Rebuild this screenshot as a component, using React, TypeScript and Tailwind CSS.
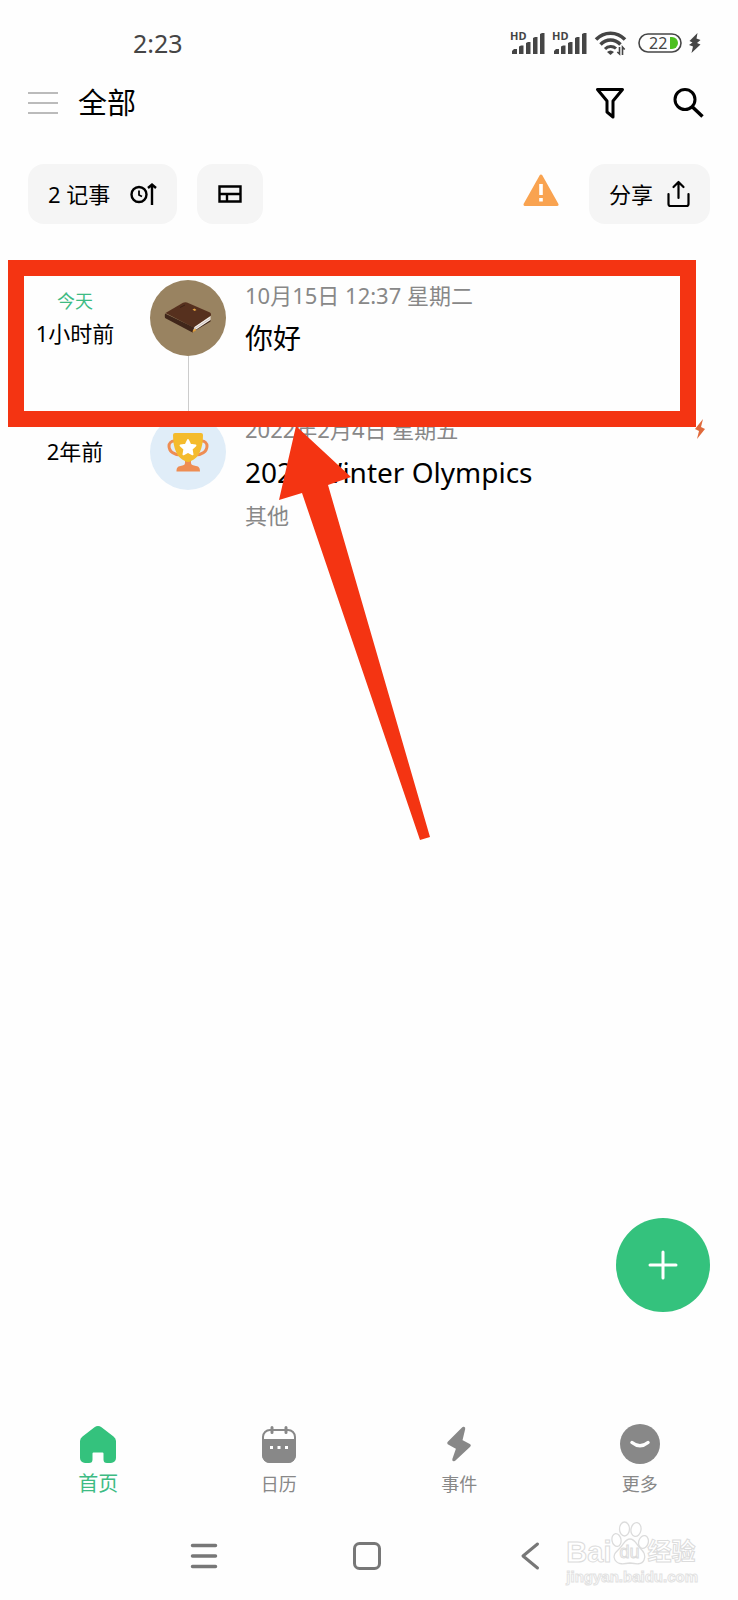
import React from "react";

type Tab = { label: string; icon: React.ReactNode; active?: boolean };

type Entry = {
  today?: string;
  ago: string;
  date: string;
  title: string;
  tag?: string;
  event?: boolean;
  badge: string;
  icon: React.ReactNode;
};

function Signal() {
  return (
    <svg width="36" height="24" viewBox="0 0 36 24" fill="#454545" aria-hidden="true">
      <path d="M2 23v-3l2-2h3v5zM9 23v-7.500l2-1h2.500v8.500zM16 23V12l2-1h2.500v12zM23 23V7l2-1h2.500v17zM30 23V3l2-1h2.500v21z" />
    </svg>
  );
}

function HdSignal() {
  return (
    <span className="relative flex">
      <Signal />
      <span className="absolute top-0 left-0 text-[11px] leading-[10px] font-bold">HD</span>
    </span>
  );
}

function Wifi() {
  return (
    <svg width="34" height="26" viewBox="0 0 34 26" fill="none" stroke="#454545" strokeWidth="3.500" aria-hidden="true">
      <path d="M2 9.500C10 1 23 1 31 9.500" />
      <path d="M6.500 14.500C12.500 8.500 20.500 8.500 26.500 14.500" />
      <path d="M11 19c3-3.300 8-3.300 11-.5" strokeWidth="3" />
      <path d="M13 22q3.500-3 7 0l-3.500 3z" fill="#454545" stroke="none" />
      <path d="M25.500 17v7l-2.200-2M28.500 25v-8l2.200 2.500" strokeWidth="1.600" />
    </svg>
  );
}

function Battery() {
  return (
    <span className="relative flex">
      <svg width="44" height="20" viewBox="0 0 44 20" fill="none" aria-hidden="true">
        <rect x="1" y="1" width="42" height="18" rx="9" stroke="#454545" strokeWidth="1.600" />
        <path d="M32 4h2a6 6 0 0 1 0 12h-2z" fill="#4cbf1f" />
      </svg>
      <span className="absolute top-0 left-[11px] text-[16px] leading-5">22</span>
    </span>
  );
}

function Book() {
  return (
    <svg width="48" height="34" viewBox="0 0 48 34" aria-hidden="true">
      <path d="M28 31.500 46.500 20.500v-2L30 28z" fill="#3b2115" />
      <path d="M29 26.500 46.500 15v4L30 30z" fill="#f1ece8" />
      <path d="M30 28 46 17.500" stroke="#c4b6b0" strokeWidth="0.800" />
      <path d="M1.500 12 19 1.700q2-1 4-.2L46 11.500q1.500 1 1 3L29.500 26.500z" fill="#56301e" />
      <path d="M1 12.500q-.5 3 0 4.500L27.500 31l1.500.500q-.5-3 1.500-5L28 25.500z" fill="#40261a" />
      <path d="m28.500 31.500 3.500-2v-2l-3 1.500zM28.500 8.500l2-1 2 1.500-2 1z" fill="#e0a040" />
      <path d="m16 6.500 5-2.500" stroke="#3b2115" strokeWidth="1" />
    </svg>
  );
}

function Trophy() {
  return (
    <svg width="42" height="40" viewBox="0 0 42 40" aria-hidden="true">
      <path d="M9 9H7a5 5 0 0 0-5 5c0 6 6 9 12 9M33 9h2a5 5 0 0 1 5 5c0 6-6 9-12 9" fill="none" stroke="#ee8d53" strokeWidth="3" />
      <path d="M18 26h6v5c0 2 2 2.500 5 3 3 .5 4 2 4 5.500H9.500c0-3.500 1-5 4-5.500 3-.5 4.500-1 4.500-3z" fill="#ee8d53" />
      <path d="M8 1h26a2 2 0 0 1 2 2c0 13-4 23-12 26q-3 2-6 0C10 26 6 16 6 3a2 2 0 0 1 2-2z" fill="#f4bb2c" />
      <path d="m21 8 2.300 4.700 5.200.8-3.800 3.700.9 5.200-4.600-2.500-4.600 2.500.9-5.200-3.800-3.700 5.200-.8z" fill="#fff" stroke="#fff" strokeWidth="1.800" strokeLinejoin="round" />
    </svg>
  );
}

const entries: Entry[] = [
  {
    today: "今天",
    ago: "1小时前",
    date: "10月15日 12:37 星期二",
    title: "你好",
    badge: "bg-[#998361]",
    icon: <Book />,
  },
  {
    ago: "2年前",
    date: "2022年2月4日 星期五",
    title: "2022 Winter Olympics",
    tag: "其他",
    event: true,
    badge: "bg-[#e0edf8]",
    icon: <Trophy />,
  },
];

const tabs: Tab[] = [
  {
    label: "首页",
    active: true,
    icon: (
      <svg width="40" height="40" viewBox="0 0 40 40" aria-hidden="true">
        <path d="M16.500 3.200a6 6 0 0 1 7 0L35.500 12.500A6 6 0 0 1 38 17v17a5 5 0 0 1-5 5h-4a3.500 3.500 0 0 1-3.500-3.500V29.500a1 1 0 0 0-1-1h-9a1 1 0 0 0-1 1v6A3.500 3.500 0 0 1 11 39H7a5 5 0 0 1-5-5V17a6 6 0 0 1 2.500-4.500z" fill="#34c27d" />
      </svg>
    ),
  },
  {
    label: "日历",
    icon: (
      <svg width="40" height="40" viewBox="0 0 40 40" aria-hidden="true">
        <rect x="4" y="6" width="32" height="32" rx="7" fill="none" stroke="#888" strokeWidth="2" />
        <path d="M3 15h34v16a8 8 0 0 1-8 8H11a8 8 0 0 1-8-8z" fill="#888" />
        <path d="M13 3.500v5M27 3.500v5" stroke="#888" strokeWidth="3" strokeLinecap="round" />
        <path d="M11 22h3v3h-3zM18.500 22h3v3h-3zM26 22h3v3h-3z" fill="#fff" />
      </svg>
    ),
  },
  {
    label: "事件",
    icon: (
      <svg width="40" height="40" viewBox="0 0 40 40" aria-hidden="true">
        <path d="M24.500 4.500 10 19l9 5-4 11.500L30 21.500 21.500 17z" fill="#888" stroke="#888" strokeWidth="3.500" strokeLinejoin="round" />
      </svg>
    ),
  },
  {
    label: "更多",
    icon: (
      <svg width="40" height="40" viewBox="0 0 40 40" aria-hidden="true">
        <circle cx="20" cy="20" r="20" fill="#888" />
        <path d="M12 18.500q8 6.500 16 0" fill="none" stroke="#fff" strokeWidth="3.500" strokeLinecap="round" />
      </svg>
    ),
  },
];

function Annotation() {
  return (
    <>
      <div className="pointer-events-none absolute -top-5 right-[42px] left-2 h-[167px] border-16 border-[#f43412]" />
      <svg className="pointer-events-none absolute top-[146px] left-[278px]" width="154" height="416" viewBox="0 0 154 416" aria-hidden="true">
        <path d="M18 0 73 51 50 59 152 411 142 414 24 67 1 74z" fill="#f43412" />
      </svg>
    </>
  );
}

function Watermark() {
  return (
    <div className="pointer-events-none absolute right-10 bottom-3.5 flex flex-col items-start font-['Liberation_Sans','Noto_Sans_CJK_SC',sans-serif] text-white">
      <div className="flex items-center text-[29px] leading-8 font-bold [-webkit-text-stroke:1px_#dcdcdc]">
        <span>Bai</span>
        <span className="relative flex w-9 justify-center">
          <svg className="absolute -top-4 left-0" width="38" height="46" viewBox="0 0 38 46" fill="#fff" stroke="#dcdcdc" strokeWidth="1.300" aria-hidden="true">
            <ellipse cx="5.500" cy="20" rx="4.500" ry="6.500" transform="rotate(-10 5.500 20)" />
            <ellipse cx="13.500" cy="9" rx="5" ry="7" />
            <ellipse cx="25" cy="9.500" rx="5" ry="7" transform="rotate(10 25 9.500)" />
            <ellipse cx="32.500" cy="22" rx="4.800" ry="6.500" transform="rotate(15 32.500 22)" />
            <path d="M19 19c5 0 6 5 10 9s6 7 4 12-8 4-14 3c-6 1-12 2-15-3s1-8 5-12 5-9 10-9z" />
          </svg>
          <span className="relative text-[18px] font-normal">du</span>
        </span>
        <span className="text-[24px]">经验</span>
      </div>
      <span className="text-[15px] leading-[18px] font-bold text-white [-webkit-text-stroke:1px_#e2e2e2]">jingyan.baidu.com</span>
    </div>
  );
}

export default function App() {
  return (
    <div lang="zh-CN" className="relative flex min-h-screen flex-col bg-[#fefefe] font-['Noto_Sans','Noto_Sans_CJK_SC',sans-serif] text-black">
      <div className="flex h-[61px] items-center justify-between pt-6 pr-9 pl-[133px] text-[#454545]">
        <time className="text-[25px] leading-8">2:23</time>
        <div className="flex items-center gap-1.5">
          <HdSignal />
          <HdSignal />
          <Wifi />
          <span className="ml-1"><Battery /></span>
          <svg width="14" height="22" viewBox="0 0 14 22" fill="#454545" aria-hidden="true">
            <path d="M9.500 1 1.500 9l3 1.500L1 13l4 1.500L3.500 21 12.500 12.500 9 11l3.500-3L8.500 6.500z" />
          </svg>
        </div>
      </div>

      <header className="flex h-[83px] items-center pr-[34px] pl-7">
        <button aria-label="菜单" className="mr-5">
          <svg width="30" height="24" viewBox="0 0 30 24" stroke="#bbb" strokeWidth="2.200" aria-hidden="true">
            <path d="M0 2h30M0 12h30M0 22h30" />
          </svg>
        </button>
        <h1 className="text-[29px] leading-10">全部</h1>
        <div className="ml-auto flex items-center gap-[46px]">
          <button aria-label="筛选">
            <svg width="32" height="34" viewBox="0 0 32 34" fill="none" stroke="#000" strokeWidth="3" strokeLinejoin="round" aria-hidden="true">
              <path d="M3.500 3.500h25L19 15v16l-6-5V15z" />
            </svg>
          </button>
          <button aria-label="搜索">
            <svg width="32" height="34" viewBox="0 0 32 34" fill="none" stroke="#000" strokeWidth="3" aria-hidden="true">
              <circle cx="13" cy="13.500" r="10" />
              <path d="m20.500 21 10 9.500" strokeWidth="3.500" />
            </svg>
          </button>
        </div>
      </header>

      <div className="flex items-center px-7 pt-5">
        <button className="flex h-[60px] items-center gap-5 rounded-2xl bg-[#f5f5f5] px-5 text-[22px]">
          2 记事
          <svg width="27" height="26" viewBox="0 0 27 26" fill="none" stroke="#000" strokeWidth="2.400" aria-hidden="true">
            <circle cx="9" cy="13.500" r="7.500" />
            <path d="M9 9.500V14l3 1.500" strokeWidth="1.800" />
            <path d="M22 24V4M18 7 22 3.500 26 7" />
          </svg>
        </button>
        <button aria-label="布局" className="ml-5 flex h-[60px] w-[66px] items-center justify-center rounded-2xl bg-[#f5f5f5]">
          <svg width="24" height="18" viewBox="0 0 24 18" fill="none" stroke="#000" strokeWidth="2.400" aria-hidden="true">
            <path d="M1.500 1.500h21v15h-21zM1.500 9h21M9 9v7.500" />
          </svg>
        </button>
        <button aria-label="提醒" className="mr-[30px] mb-2 ml-auto">
          <svg width="36" height="34" viewBox="0 0 36 34" aria-hidden="true">
            <path d="M18 3 34 31.500H2z" fill="#f9a350" stroke="#f9a350" strokeWidth="3" strokeLinejoin="round" />
            <path d="M16.200 11h3.600v11h-3.600zM16.200 25h3.600v3.500h-3.600z" fill="#fff" />
          </svg>
        </button>
        <button className="flex h-[60px] items-center gap-3.5 rounded-2xl bg-[#f5f5f5] px-5 text-[22px]">
          分享
          <svg width="23" height="28" viewBox="0 0 23 28" fill="none" stroke="#000" strokeWidth="2.200" strokeLinecap="round" strokeLinejoin="round" aria-hidden="true">
            <path d="M11.500 18V2M6.500 7l5-5 5 5M1.500 14v10a2 2 0 0 0 2 2h16a2 2 0 0 0 2-2V14" />
          </svg>
        </button>
      </div>

      <main className="relative mt-14 flex-1">
        <ul>
          {entries.map((entry, index) => (
            <li key={entry.title} className="flex min-h-[134px]">
              <div className="flex h-[74px] w-[150px] flex-col items-center justify-center leading-8">
                {entry.today && <span className="text-[18px] leading-8 text-[#3dbb83]">{entry.today}</span>}
                <span className="text-[22px] leading-8">{entry.ago}</span>
              </div>
              <div className="flex w-[76px] flex-col items-center">
                <div className={`flex size-[76px] items-center justify-center rounded-full ${entry.badge}`}>{entry.icon}</div>
                {index < entries.length - 1 && <div className="w-px flex-1 bg-[#ccc]" />}
              </div>
              <div className="flex flex-1 flex-col pr-[33px] pl-[19px]">
                <div className="flex items-center justify-between text-[22px] leading-[30px] text-[#888]">
                  {entry.date}
                  {entry.event && (
                    <svg width="10" height="20" viewBox="0 0 10 20" fill="#e06a3c" aria-hidden="true">
                      <path d="M8 0 0 10l4 2-2 8 8-10-4-2z" />
                    </svg>
                  )}
                </div>
                <h2 className="mt-2 text-[28px] leading-10">{entry.title}</h2>
                {entry.tag && <p className="mt-2 text-[22px] leading-[30px] text-[#888]">{entry.tag}</p>}
              </div>
            </li>
          ))}
        </ul>
        <Annotation />
        <button aria-label="添加" className="absolute right-7 bottom-28 flex size-[94px] items-center justify-center rounded-full bg-[#34c27d]">
          <svg width="30" height="30" viewBox="0 0 30 30" stroke="#fff" strokeWidth="3" strokeLinecap="round" aria-hidden="true">
            <path d="M15 2v26M2 15h26" />
          </svg>
        </button>
      </main>

      <nav className="grid grid-cols-4 px-2 pb-3.5">
        {tabs.map((tab) => (
          <a
            key={tab.label}
            href="#"
            className={`flex flex-col items-center gap-1.5 leading-7 ${tab.active ? "text-[20px] text-[#3dbb83]" : "text-[18px] text-[#888]"}`}
          >
            {tab.icon}
            <span className="leading-7">{tab.label}</span>
          </a>
        ))}
      </nav>

      <div className="grid h-22 grid-cols-3 items-center justify-items-center pr-[127px] pl-[123px]">
        <button aria-label="最近任务">
          <svg width="28" height="28" viewBox="0 0 28 28" stroke="#777" strokeWidth="3.500" strokeLinecap="round" aria-hidden="true">
            <path d="M2.500 3.500h23M2.500 14h23M2.500 24.500h23" />
          </svg>
        </button>
        <button aria-label="主屏幕">
          <svg width="28" height="28" viewBox="0 0 28 28" fill="none" stroke="#777" strokeWidth="3" aria-hidden="true">
            <rect x="1.500" y="1.500" width="25" height="25" rx="5" />
          </svg>
        </button>
        <button aria-label="返回">
          <svg width="20" height="30" viewBox="0 0 20 30" fill="none" stroke="#777" strokeWidth="3" strokeLinecap="round" strokeLinejoin="round" aria-hidden="true">
            <path d="M17.500 3 3 15l14.500 12" />
          </svg>
        </button>
      </div>
      <Watermark />
    </div>
  );
}
